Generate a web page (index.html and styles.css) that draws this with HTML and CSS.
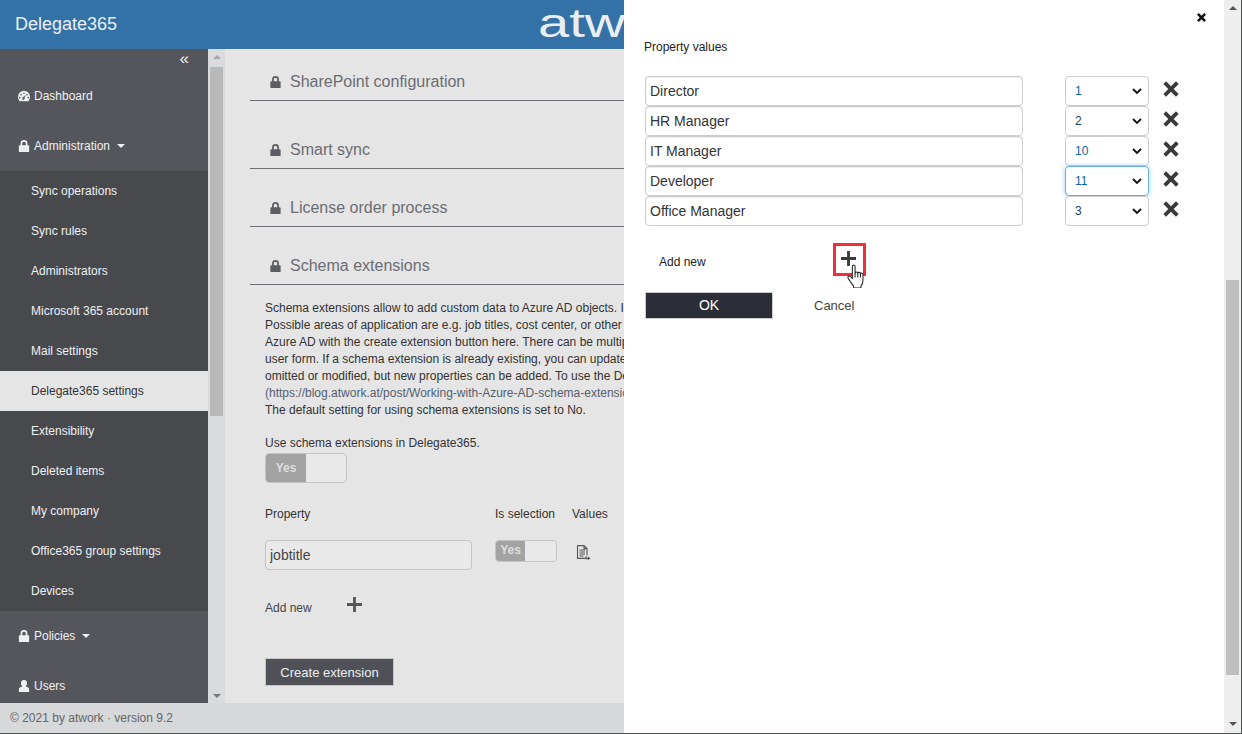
FILE: index.html
```html
<!DOCTYPE html>
<html lang="en">
<head>
    <meta charset="UTF-8">
    <title>Delegate365</title>
    <link rel="stylesheet" href="styles.css">
</head>
<body>
<svg class="defs" width="0" height="0">
    <symbol id="lock" viewBox="0 0 12 14"><path d="M1 6h1V4a4 4 0 0 1 8 0v2h1a1 1 0 0 1 1 1v6a1 1 0 0 1-1 1H1a1 1 0 0 1-1-1V7a1 1 0 0 1 1-1zm3 0h4V4a2 2 0 0 0-4 0z"/></symbol>
    <symbol id="remove" viewBox="0 0 18 18"><path d="M3.4 0.4 9 6l5.6-5.6 3 3L12 9l5.6 5.6-3 3L9 12l-5.6 5.6-3-3L6 9 .4 3.4z"/></symbol>
    <symbol id="plus" viewBox="0 0 16 16"><path d="M6.5 0h3v6.5H16v3H9.500V16h-3V9.500H0v-3h6.500z"/></symbol>
</svg>

<div class="app">
    <header class="topbar">
        <div class="brand">Delegate365</div>
        <div class="logo">atwo</div>
    </header>

    <div class="middle">
        <nav class="sidebar">
            <div class="collapse">«</div>
            <a class="nav-top">
                <svg class="nav-icon" viewBox="0 0 14 12"><path d="M7 0a7 7 0 0 1 7 7c0 2-.7 3.500-1.700 5H1.700C.7 10.500 0 9 0 7a7 7 0 0 1 7-7zM7 2a.9.9 0 1 0 0 1.800A.9.9 0 0 0 7 2zM3.500 3.500a.9.9 0 1 0 0 1.800.9.9 0 0 0 0-1.800zM10.500 3.500a.9.9 0 1 0 0 1.800.9.9 0 0 0 0-1.800zM2 7a.9.9 0 1 0 0 1.800A.9.9 0 0 0 2 7zM12 7a.9.9 0 1 0 0 1.800A.9.9 0 0 0 12 7zM9 4.500 6.300 7.300a1.500 1.500 0 1 0 1.400.8z" fill-rule="evenodd"/></svg>
                Dashboard
            </a>
            <a class="nav-top">
                <svg class="nav-icon"><use href="#lock"/></svg>
                Administration <span class="caret"></span>
            </a>
            <div class="submenu">
                <a class="nav-sub">Sync operations</a>
                <a class="nav-sub">Sync rules</a>
                <a class="nav-sub">Administrators</a>
                <a class="nav-sub">Microsoft 365 account</a>
                <a class="nav-sub">Mail settings</a>
                <a class="nav-sub active">Delegate365 settings</a>
                <a class="nav-sub">Extensibility</a>
                <a class="nav-sub">Deleted items</a>
                <a class="nav-sub">My company</a>
                <a class="nav-sub">Office365 group settings</a>
                <a class="nav-sub">Devices</a>
            </div>
            <a class="nav-top">
                <svg class="nav-icon"><use href="#lock"/></svg>
                Policies <span class="caret"></span>
            </a>
            <a class="nav-top">
                <svg class="nav-icon" viewBox="0 0 12 14"><path d="M6 0a3.500 3.500 0 0 1 3.500 3.500C9.500 5.500 8.500 7 8 7.500c2.500.5 4 1.500 4 3.500v3H0v-3c0-2 1.500-3 4-3.500C3.500 7 2.500 5.500 2.500 3.500A3.500 3.500 0 0 1 6 0z"/></svg>
                Users
            </a>
        </nav>

        <div class="side-scroll">
            <span class="arrow-up"></span>
            <span class="side-thumb"></span>
            <span class="arrow-down"></span>
        </div>

        <main class="content">
            <h3 class="section first"><svg class="head-lock"><use href="#lock"/></svg>SharePoint configuration</h3>
            <h3 class="section"><svg class="head-lock"><use href="#lock"/></svg>Smart sync</h3>
            <h3 class="section short"><svg class="head-lock"><use href="#lock"/></svg>License order process</h3>
            <h3 class="section short"><svg class="head-lock"><use href="#lock"/></svg>Schema extensions</h3>

            <p class="desc">Schema extensions allow to add custom data to Azure AD objects. In
                <br>Possible areas of application are e.g. job titles, cost center, or other
                <br>Azure AD with the create extension button here. There can be multip
                <br>user form. If a schema extension is already existing, you can update
                <br>omitted or modified, but new properties can be added. To use the De
                <br><span class="desc-link">(https://blog.atwork.at/post/Working-with-Azure-AD-schema-extensio</span>
                <br>The default setting for using schema extensions is set to No.</p>

            <div class="use-label">Use schema extensions in Delegate365.</div>
            <div class="toggle toggle-big"><span class="toggle-on">Yes</span></div>

            <div class="prop-head">
                <span class="col-prop">Property</span>
                <span class="col-sel">Is selection</span>
                <span>Values</span>
            </div>
            <div class="prop-row">
                <input class="prop-input" type="text" value="jobtitle">
                <div class="toggle toggle-small"><span class="toggle-on">Yes</span></div>
                <svg class="doc-icon" viewBox="0 0 15 15" fill="none" stroke="#555" stroke-width="1.100">
                    <path d="M1.500.6h6.500l3 3v6.900M1.500.6v12.800h7.500M8 .6v3h3M3.500 5h5.500M3.500 7h5.500M3.500 9h5.500M3.500 11h4"/>
                    <path d="M10 11.500v2h2.500" stroke-width="1.500"/><path d="M12 11.500l2.500 2-2.500 1.500z" fill="#555" stroke="none"/>
                </svg>
            </div>
            <div class="add-row">
                <span>Add new</span>
                <svg class="add-plus"><use href="#plus"/></svg>
            </div>
            <button class="create-btn">Create extension</button>
        </main>
    </div>

    <footer class="footer">© 2021 by atwork · version 9.2</footer>
</div>

<!-- Панель справа поверх страницы -->
<aside class="panel">
    <div class="panel-body">
        <div class="panel-close"><svg viewBox="0 0 10 10"><path d="M2 0 5 3 8 0l2 2-3 3 3 3-2 2-3-3-3 3-2-2 3-3-3-3z"/></svg></div>
        <div class="panel-title">Property values</div>

        <div class="value-rows">
            <div class="value-row">
                <input class="value-input" type="text" value="Director">
                <select class="value-select"><option>1</option></select>
                <svg class="remove-icon"><use href="#remove"/></svg>
            </div>
            <div class="value-row">
                <input class="value-input" type="text" value="HR Manager">
                <select class="value-select dark"><option>2</option></select>
                <svg class="remove-icon"><use href="#remove"/></svg>
            </div>
            <div class="value-row">
                <input class="value-input" type="text" value="IT Manager">
                <select class="value-select"><option>10</option></select>
                <svg class="remove-icon"><use href="#remove"/></svg>
            </div>
            <div class="value-row">
                <input class="value-input" type="text" value="Developer">
                <select class="value-select focused"><option>11</option></select>
                <svg class="remove-icon"><use href="#remove"/></svg>
            </div>
            <div class="value-row">
                <input class="value-input" type="text" value="Office Manager">
                <select class="value-select dark"><option>3</option></select>
                <svg class="remove-icon"><use href="#remove"/></svg>
            </div>
        </div>

        <div class="panel-add">
            <span class="panel-add-label">Add new</span>
            <span class="plus-box">
                <svg class="plus-icon"><use href="#plus"/></svg>
                <svg class="hand" viewBox="1 0 16 23">
                    <path d="M5.500 2.200c0-1.600 2.600-1.600 2.600 0v6.300c.3-1.300 2.500-1.200 2.600.3.400-1.200 2.400-1 2.600.5.500-1 2.300-.7 2.400.8v5.400c0 2.800-1 4.500-2 5.700v1.800H6.700v-2C5 19 3.700 17 1.500 13.700.5 12 2.600 10.700 3.800 12l1.700 2z" fill="#fff" stroke="#222" stroke-width="1" stroke-linejoin="round"/>
                    <path d="M8.100 8.500V13M10.700 8.800V13M13.300 9.300V13" stroke="#222" stroke-width="1" fill="none"/>
                </svg>
            </span>
        </div>

        <div class="panel-actions">
            <button class="ok-btn">OK</button>
            <span class="cancel">Cancel</span>
        </div>
    </div>
    <div class="panel-scroll">
        <span class="arrow-up dark-arrow"></span>
        <span class="panel-thumb"></span>
        <span class="arrow-down dark-arrow"></span>
    </div>
</aside>
</body>
</html>
```

FILE: styles.css
```css
* {
    box-sizing: border-box;
}

html, body {
    height: 100%;
}

body {
    margin: 0;
    overflow: hidden;
    font-family: "Liberation Sans", Arial, sans-serif;
    font-size: 12px;
    color: #333;
    background: #e5e5e5;
    border-right: 1px solid #4a5450;
    border-bottom: 1px solid #4a5450;
    position: relative;
}

.defs {
    position: absolute;
}

.app {
    display: flex;
    flex-direction: column;
    height: 733px;
}

/* Шапка */
.topbar {
    flex: 0 0 49px;
    background: #3371a7;
    display: flex;
    align-items: center;
    padding-left: 15px;
    overflow: hidden;
}

.brand {
    width: 523px;
    font-size: 18px;
    color: #e8eef3;
}

.logo {
    font-size: 40px;
    line-height: 40px;
    color: #e9eef1;
    transform: scaleX(1.4);
    transform-origin: left center;
    white-space: nowrap;
    margin-top: -4px;
}

.middle {
    flex: 1;
    display: flex;
    min-height: 0;
}

/* Меню */
.sidebar {
    flex: 0 0 208px;
    background: #55565b;
    overflow: hidden;
    color: #eef0f2;
}

.collapse {
    height: 22px;
    padding-right: 19px;
    text-align: right;
    font-size: 17px;
    line-height: 20px;
    color: #eef0f2;
}

.nav-top {
    display: flex;
    align-items: center;
    height: 50px;
    padding-left: 17px;
    color: #eef0f2;
}

.nav-icon {
    width: 12px;
    height: 12px;
    margin-right: 4px;
    fill: #eef0f2;
    flex: none;
    margin-left: 1px;
}

.caret {
    width: 0;
    height: 0;
    margin-left: 7px;
    border-left: 4px solid transparent;
    border-right: 4px solid transparent;
    border-top: 4px solid #eef0f2;
}

.submenu {
    background: #48494d;
}

.nav-sub {
    display: block;
    height: 40px;
    line-height: 40px;
    padding-left: 31px;
    color: #eef0f2;
}

.nav-sub.active {
    background: #e5e5e5;
    color: #333;
}

/* Полоса прокрутки меню */
.side-scroll {
    flex: 0 0 17px;
    background: #dadbdc;
    display: flex;
    flex-direction: column;
    align-items: center;
    padding: 6px 2px 5px;
}

.arrow-up, .arrow-down {
    width: 0;
    height: 0;
    border-left: 4px solid transparent;
    border-right: 4px solid transparent;
    flex: none;
}

.arrow-up {
    border-bottom: 4px solid #a9a9a9;
}

.arrow-down {
    border-top: 4px solid #777;
}

.dark-arrow.arrow-up, .dark-arrow.arrow-down {
    border-bottom-color: #555;
    border-top-color: #555;
}

.side-thumb {
    width: 13px;
    height: 349px;
    margin-top: 8px;
    margin-bottom: auto;
    background: #b9b9b9;
}

/* Контент */
.content {
    flex: 1;
    min-width: 0;
    overflow: hidden;
    padding: 0 0 0 25px;
    background: #e5e5e5;
    white-space: nowrap;
}

.section {
    height: 40px;
    padding-top: 3px;
    margin: 28px 0 0 0;
    font-size: 16px;
    font-weight: normal;
    line-height: 20px;
    color: #6b6d73;
    border-bottom: 1px solid #6f7076;
    display: flex;
    align-items: center;
}

.section.first {
    margin-top: 12px;
}

.section.short {
    margin-top: 18px;
}

.head-lock {
    width: 11px;
    height: 12px;
    margin: 0 9px 0 20px;
    fill: #5d5e64;
}

.desc {
    margin: 15px 0 0 15px;
    line-height: 17px;
    color: #333;
}

.desc-link {
    color: #55606c;
}

.use-label {
    margin: 17px 0 0 15px;
    line-height: 15px;
}

.toggle {
    background: #e9e9e9;
    border: 1px solid #c4c4c4;
    border-radius: 4px;
    overflow: hidden;
    display: flex;
    margin-left: 15px;
}

.toggle-on {
    background: #a3a3a3;
    color: #dedede;
    font-weight: bold;
    text-align: center;
}

.toggle-big {
    width: 82px;
    height: 30px;
    margin-top: 2px;
}

.toggle-big .toggle-on {
    width: 40px;
    line-height: 28px;
}

.toggle-small {
    width: 62px;
    height: 22px;
    margin-left: 23px;
    align-self: flex-start;
}

.toggle-small .toggle-on {
    width: 29px;
    line-height: 18px;
}

.prop-head {
    display: flex;
    margin: 23px 0 0 15px;
    line-height: 17px;
}

.col-prop {
    width: 230px;
}

.col-sel {
    width: 77px;
}

.prop-row {
    display: flex;
    align-items: flex-start;
    margin: 17px 0 0 15px;
}

.prop-input {
    width: 207px;
    height: 30px;
    padding: 0 4px;
    border: 1px solid #c4c4c4;
    border-radius: 4px;
    background: #e9e9e9;
    font: 14px "Liberation Sans", Arial, sans-serif;
    color: #444;
}

.doc-icon {
    width: 15px;
    height: 15px;
    margin: 5px 0 0 19px;
}

.add-row {
    display: flex;
    margin: 22px 0 0 15px;
    height: 23px;
    align-items: flex-end;
    color: #444;
    line-height: 14px;
}

.add-plus {
    width: 15px;
    height: 15px;
    margin: 0 0 3px 35px;
    fill: #555;
}

.create-btn {
    display: block;
    width: 129px;
    height: 28px;
    margin: 43px 0 0 15px;
    background: #505157;
    border: 1px solid #c4c4c4;
    color: #eee;
    font: 13px "Liberation Sans", Arial, sans-serif;
}

.footer {
    flex: 0 0 30px;
    background: #d7d8da;
    padding: 8px 10px 0;
    color: #666;
    line-height: 14px;
}

/* Панель справа */
.panel {
    position: absolute;
    top: 0;
    right: 0;
    bottom: 0;
    width: 617px;
    background: #fff;
    display: flex;
}

.panel-body {
    flex: 1;
    position: relative;
    padding: 40px 0 0 20px;
    color: #222;
}

.panel-close {
    position: absolute;
    top: 13px;
    left: 573px;
    width: 9px;
    height: 9px;
}

.panel-close svg {
    display: block;
    width: 9px;
    height: 9px;
    fill: #111;
}

.panel-title {
    line-height: 14px;
}

.value-rows {
    margin: 22px 0 0 1px;
}

.value-row {
    display: flex;
    align-items: center;
    height: 30px;
}

.value-input {
    width: 378px;
    height: 30px;
    padding: 0 4px;
    border: 1px solid #ccc;
    border-radius: 4px;
    background: #fff;
    font: 14px "Liberation Sans", Arial, sans-serif;
    color: #333;
    box-shadow: inset 0 1px 1px rgba(0, 0, 0, 0.075);
}

.value-select {
    appearance: none;
    width: 84px;
    height: 30px;
    margin-left: 42px;
    padding: 0 0 0 9px;
    border: 1px solid #ccc;
    border-radius: 4px;
    background: #fff url("data:image/svg+xml,%3Csvg xmlns='http://www.w3.org/2000/svg' width='10' height='6'%3E%3Cpath d='M1 1l4 4 4-4' fill='none' stroke='%23111' stroke-width='1.800'/%3E%3C/svg%3E") no-repeat right 6px center;
    font: 12px "Liberation Sans", Arial, sans-serif;
    color: #0a62b0;
}

.value-select.dark {
    color: #1a3f73;
}

.value-select.focused {
    border-color: #66afe9;
    box-shadow: 0 0 5px rgba(102, 175, 233, 0.6);
}

.remove-icon {
    width: 16px;
    height: 16px;
    margin: -5px 0 0 14px;
    fill: #3a3a3a;
}

.panel-add {
    display: flex;
    align-items: center;
    height: 33px;
    margin-top: 17px;
    padding-left: 15px;
}

.panel-add-label {
    width: 174px;
    margin-top: 4px;
}

.plus-box {
    position: relative;
    width: 33px;
    height: 33px;
    border: 3px solid #f03038;
    display: flex;
    justify-content: center;
    align-items: center;
}

.plus-icon {
    width: 15px;
    height: 15px;
    fill: #3a3a3a;
    margin: -3px 2px 0 0;
}

/* Курсор над кнопкой */
.hand {
    position: absolute;
    left: 11px;
    top: 18px;
    width: 18px;
    height: 24px;
}

.panel-actions {
    display: flex;
    align-items: center;
    margin-top: 16px;
    margin-left: 1px;
}

.ok-btn {
    width: 128px;
    height: 27px;
    padding-bottom: 3px;
    background: #2b2e36;
    border: 1px solid #ccc;
    color: #fff;
    font: 14px "Liberation Sans", Arial, sans-serif;
}

.cancel {
    margin-left: 41px;
    font-size: 13px;
    color: #444;
}

.panel-scroll {
    flex: 0 0 17px;
    background: #eeeeee;
    display: flex;
    flex-direction: column;
    align-items: center;
    padding: 6px 2px 7px;
}

.panel-thumb {
    width: 13px;
    height: 395px;
    margin-top: auto;
    margin-bottom: 47px;
    background: #bfbfbf;
}
```
